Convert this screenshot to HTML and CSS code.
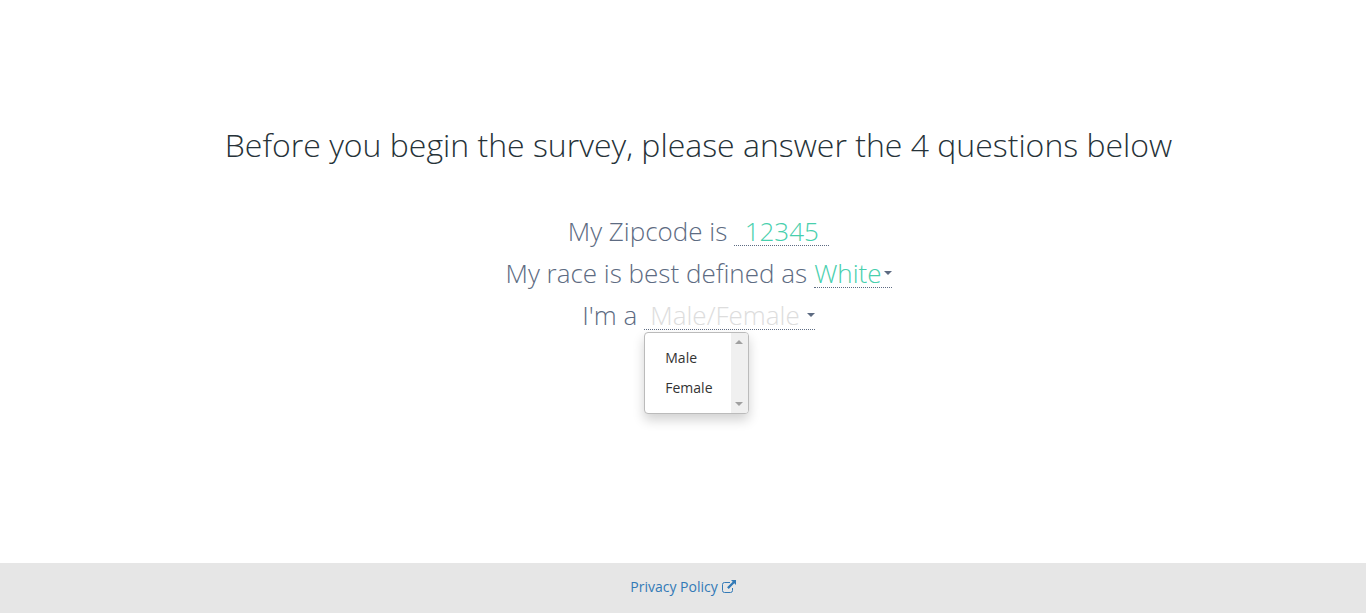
FILE: index.html
```html
<!DOCTYPE html>
<html lang="en">
<head>
<meta charset="utf-8">
<title>Survey</title>
<link rel="stylesheet" href="styles.css">
</head>
<body>
<main class="survey">
  <h1 class="title">Before you begin the survey, please answer the 4 questions below</h1>
  <form class="questions">
    <div class="question">
      <label for="zip">My Zipcode is</label>
      <input class="field zip" id="zip" type="text" value="12345">
    </div>
    <div class="question">
      <label for="race">My race is best defined as</label>
      <button class="field" id="race" type="button">White<span class="caret"></span></button>
    </div>
    <div class="question">
      <label for="gender">I'm a</label>
      <div class="dropdown">
        <button class="field empty" id="gender" type="button" aria-expanded="true">Male/Female<span class="caret"></span></button>
        <div class="menu">
          <ul class="options">
            <li><button class="option" type="button">Male</button></li>
            <li><button class="option" type="button">Female</button></li>
          </ul>
          <div class="scrollbar" aria-hidden="true">
            <span class="arrow arrow-up"></span>
            <span class="arrow arrow-down"></span>
          </div>
        </div>
      </div>
    </div>
  </form>
</main>
<footer class="footer">
  <a class="policy" href="#">Privacy Policy
    <svg class="icon" viewBox="0 0 14 14" aria-hidden="true"><path d="M8 2.500H2.500A2 2 0 0 0 .5 4.500v6A2 2 0 0 0 2.500 12.500h6a2 2 0 0 0 2-2V8" fill="none" stroke="currentColor"/><path d="M9 0H14v5l-1.700-1.700-5.600 5.600-1.600-1.600 5.600-5.600z" fill="currentColor"/></svg>
  </a>
</footer>
</body>
</html>
```
FILE: styles.css
```css
* { box-sizing: border-box; }
body {
  margin: 0;
  min-height: 100vh;
  display: flex;
  flex-direction: column;
  font-family: "Open Sans", sans-serif;
  font-size: 14px;
  color: #263238;
  background: #fff;
}
.survey {
  flex: 1;
  padding: 122px 0 0 31px;
  text-align: center;
}
.title {
  margin: 0 0 42px;
  font-size: 32px;
  line-height: 46px;
  font-weight: 300;
}
.question {
  display: flex;
  justify-content: center;
  align-items: flex-start;
  gap: 7px;
  font-size: 26px;
  line-height: 42px;
  font-weight: 300;
  color: #5d6b82;
}
.field {
  display: flex;
  align-items: center;
  height: 36px;
  padding: 7px 0 0;
  border: 0;
  border-bottom: 1px dotted #5d6b82;
  border-radius: 0;
  background: none;
  font: inherit;
  line-height: 28px;
  color: #48cfad;
}
.zip { width: 95px; text-align: center; }
.empty { padding-left: 6px; color: #ddd; }
.empty .caret { margin-left: 7px; }
.caret {
  margin-left: 2px;
  border: 4px solid transparent;
  border-top-color: #5d6b82;
  border-bottom: 0;
}
.dropdown { position: relative; }
.menu {
  position: absolute;
  top: 38px;
  left: 0;
  display: flex;
  overflow: hidden;
  border: 1px solid #bbb;
  border-radius: 4px;
  background: #fff;
  box-shadow: 0 6px 12px rgba(0,0,0,.18);
}
.options {
  margin: 0;
  padding: 10px 0;
  list-style: none;
}
.option {
  display: block;
  padding: 0 18px 0 20px;
  border: 0;
  background: none;
  font: 400 14px/30px "Open Sans", sans-serif;
  color: #333;
}
.scrollbar {
  display: flex;
  flex-direction: column;
  justify-content: space-between;
  align-items: center;
  width: 17px;
  padding: 7px 0;
  background: #f0f0f0;
}
.arrow {
  border: 4px solid transparent;
}
.arrow-up { border-top: 0; border-bottom-color: #a0a0a0; }
.arrow-down { border-bottom: 0; border-top-color: #a0a0a0; }
.footer {
  display: flex;
  justify-content: center;
  align-items: center;
  height: 50px;
  padding-bottom: 3px;
  background: #e6e6e6;
}
.policy {
  display: flex;
  align-items: center;
  gap: 4px;
  color: #337ab7;
  text-decoration: none;
}
.icon { width: 14px; height: 14px; }
```
